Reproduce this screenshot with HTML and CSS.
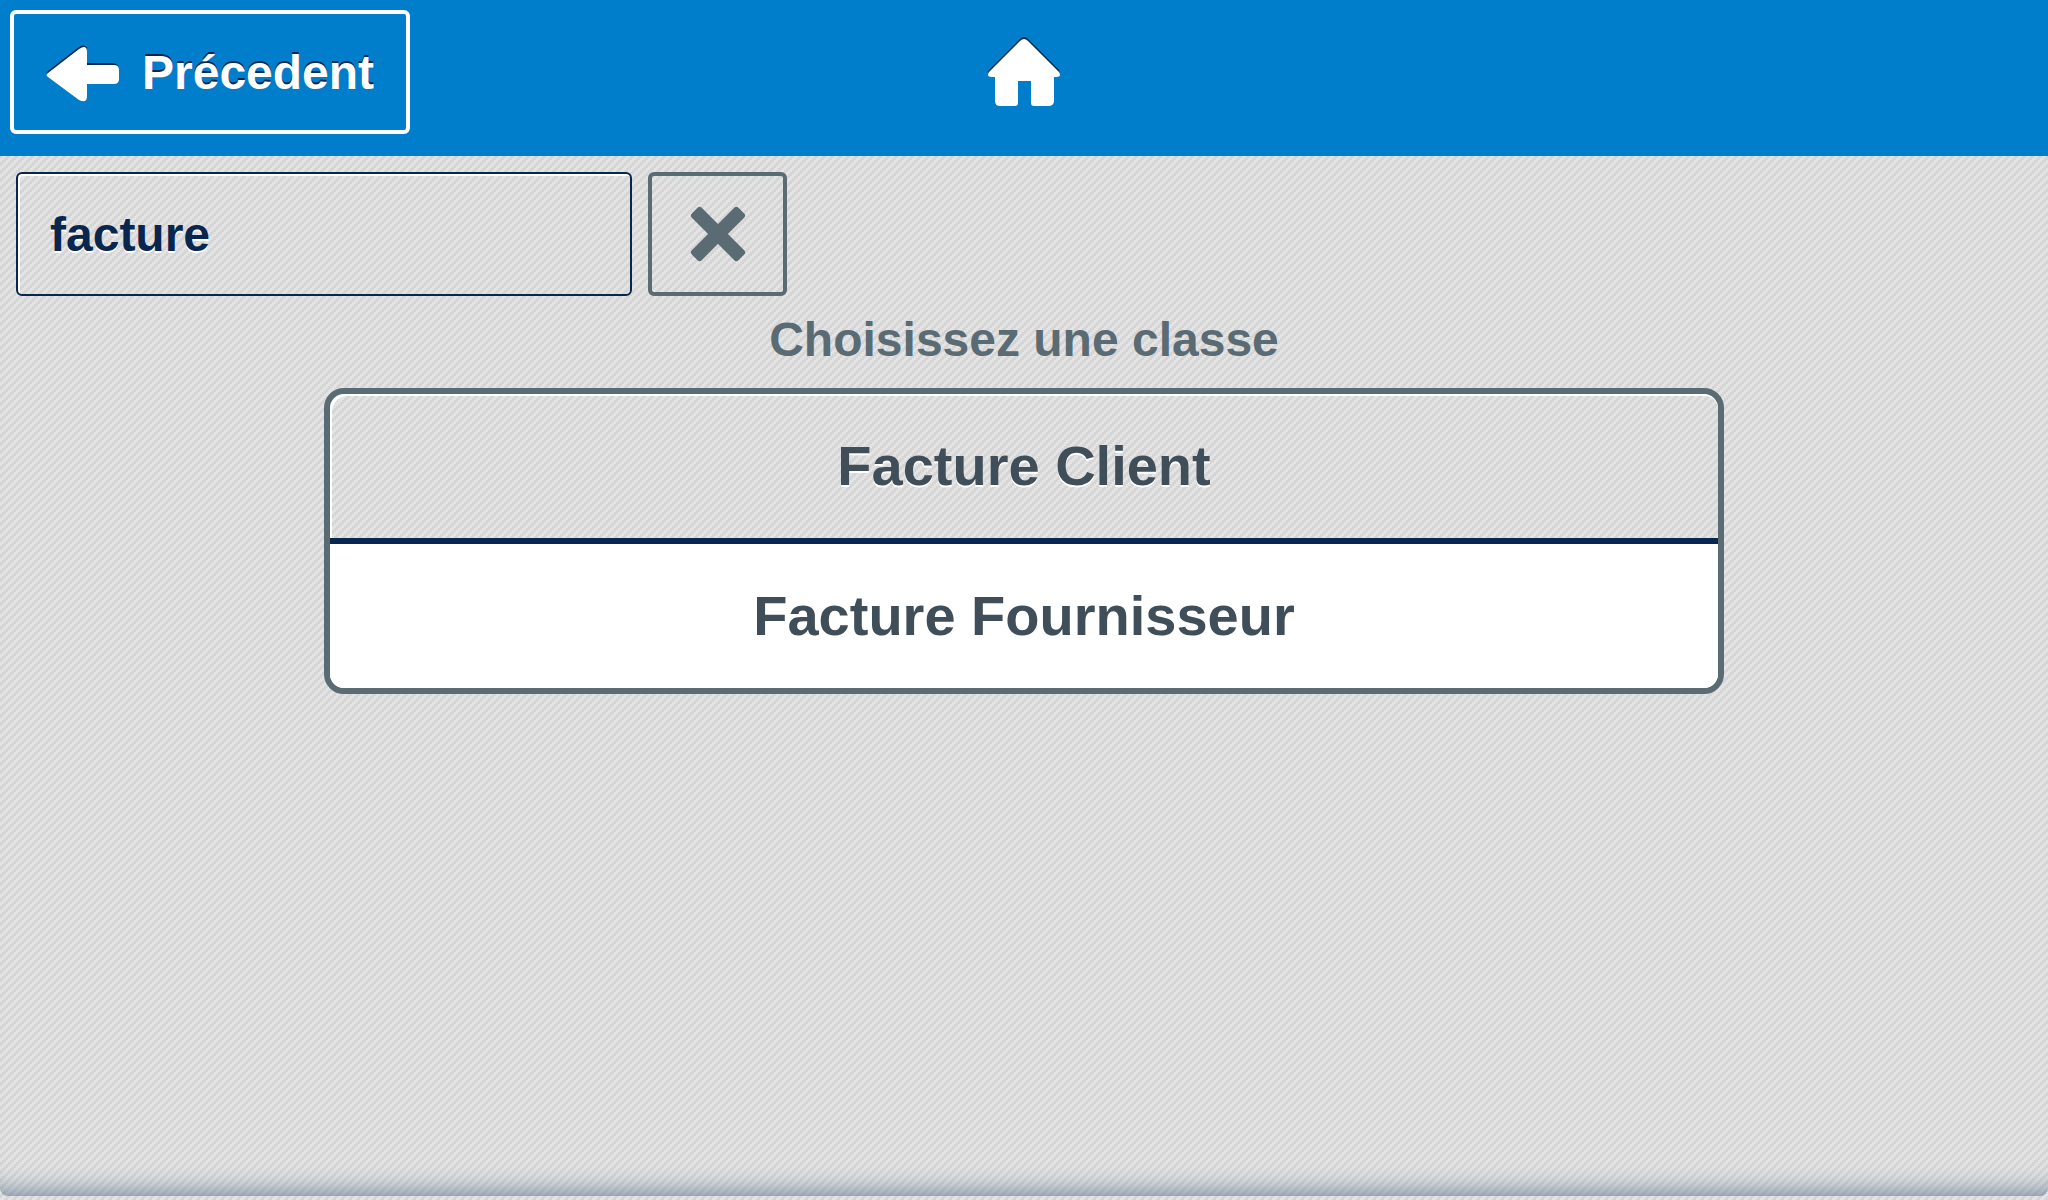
FILE: index.html
```html
<!DOCTYPE html>
<html lang="fr">
<head>
<meta charset="utf-8">
<meta name="viewport" content="width=device-width, initial-scale=1">
<title>Choisissez une classe</title>
<link rel="stylesheet" href="styles.css">
</head>
<body>
<header class="topbar">
  <button class="back" type="button">
    <svg class="back-icon" viewBox="0 0 74 60" aria-hidden="true">
      <path class="icon-shadow" d="M2 29 33 5Q37 2 41 5V21H66Q73 21 73 28V34H2Q-1 32 2 29Z"/>
      <path class="icon-face" d="M2 31 33 7Q41 2 41 10V23H68Q73 23 73 28V37Q73 42 68 42H41V54Q41 62 33 58L2 35Q-1 33 2 31Z"/>
    </svg>
    <span>Précedent</span>
  </button>
  <a class="home" href="#" aria-label="Accueil">
    <svg class="home-icon" viewBox="0 0 74 70" aria-hidden="true">
      <path class="icon-shadow" d="M2 33 33 2Q37-2 41 2L72 33Q74 38 69 38H5Q-1 38 2 33Z"/>
      <path class="icon-face" d="M2 35 33 4Q37 0 41 4L72 35Q75 40 69 40H67V64Q67 69 61 69H47Q44 69 44 66V44H31V66Q31 69 28 69H13Q8 69 8 64V40H5Q-1 40 2 35Z"/>
    </svg>
  </a>
</header>
<main class="content">
  <form class="search">
    <input class="search-field" type="text" value="facture" aria-label="Rechercher une classe">
    <button class="clear" type="reset" aria-label="Effacer">
      <svg class="clear-icon" viewBox="-28 -28 56 56" aria-hidden="true">
        <rect x="-33" y="-7" width="66" height="14" rx="3" transform="rotate(45)"/>
        <rect x="-33" y="-7" width="66" height="14" rx="3" transform="rotate(-45)"/>
      </svg>
    </button>
  </form>
  <h1 class="title">Choisissez une classe</h1>
  <div class="choices">
    <button class="choice" type="button">Facture Client</button>
    <button class="choice choice-active" type="button">Facture Fournisseur</button>
  </div>
</main>
</body>
</html>
```
FILE: styles.css
```css
* {
  box-sizing: border-box;
}

:root {
  --blue: #007dcb;
  --navy: #08264e;
  --slate: #5a6b73;
  --stripes: url("data:image/svg+xml,%3Csvg xmlns='http://www.w3.org/2000/svg' width='8' height='8' shape-rendering='crispEdges'%3E%3Crect width='8' height='8' fill='%23d5d5d5'/%3E%3Cpath fill='%23e4e4e4' d='M0 6h4v2H0zM2 4h4v2H2zM4 2h4v2H4zM6 0h2v2H6zM0 0h2v2H0z'/%3E%3C/svg%3E");
}

html {
  height: 100%;
  background: var(--stripes);
}

body {
  display: flex;
  flex-direction: column;
  min-height: calc(100% - 4px);
  margin: 0;
  border-radius: 0 0 8px 8px;
  box-shadow: inset 0 -28px 28px -28px #55708e;
  font-family: "Liberation Sans", Arial, sans-serif;
  font-weight: bold;
}

button,
input {
  margin: 0;
  font: inherit;
}

.topbar {
  display: grid;
  grid-template-columns: 1fr auto 1fr;
  align-items: start;
  height: 156px;
  padding: 10px;
  background: var(--blue);
}

.back {
  display: flex;
  align-items: center;
  justify-self: start;
  gap: 22px;
  height: 124px;
  padding: 0 32px;
  border: 4px solid #fff;
  border-radius: 6px;
  background: none;
  color: #fff;
  font-size: 48px;
  text-shadow: 0 -2px var(--navy);
}

.back-icon {
  width: 74px;
  height: 60px;
}

.icon-shadow {
  fill: var(--navy);
}

.icon-face {
  fill: #fff;
}

.home {
  display: block;
  padding: 27px 0;
}

.home-icon {
  display: block;
  width: 74px;
  height: 70px;
}

.search {
  display: flex;
  gap: 16px;
  padding: 16px 16px 14px;
}

.search-field {
  width: 616px;
  height: 124px;
  padding: 0 32px;
  border: 2px solid var(--navy);
  border-radius: 6px;
  outline: none;
  background: none;
  box-shadow: inset 2px 2px #fff;
  color: var(--navy);
  font-size: 48px;
  text-shadow: 0 2px #fff;
}

.clear {
  display: grid;
  place-items: center;
  width: 139px;
  height: 124px;
  padding: 0;
  border: 4px solid var(--slate);
  border-radius: 6px;
  background: none;
}

.clear-icon {
  width: 56px;
  height: 56px;
  fill: var(--slate);
}

.title {
  margin: 0;
  color: var(--slate);
  font-size: 48px;
  line-height: 60px;
  text-align: center;
}

.choices {
  width: 1400px;
  max-width: calc(100% - 32px);
  margin: 18px auto;
  border: 6px solid var(--slate);
  border-radius: 20px;
  background: #fff;
}

.choice {
  display: block;
  width: 100%;
  height: 144px;
  padding: 0 0 2px;
  border: 0;
  border-radius: 16px 16px 0 0;
  background: var(--stripes);
  box-shadow: inset 2px 2px #fff;
  color: #3f4e59;
  font-size: 56px;
  text-shadow: 0 2px #fff;
}

.choice-active {
  height: 150px;
  border-top: 6px solid var(--navy);
  border-radius: 0 0 14px 14px;
  background: #fff;
  box-shadow: none;
}
```
